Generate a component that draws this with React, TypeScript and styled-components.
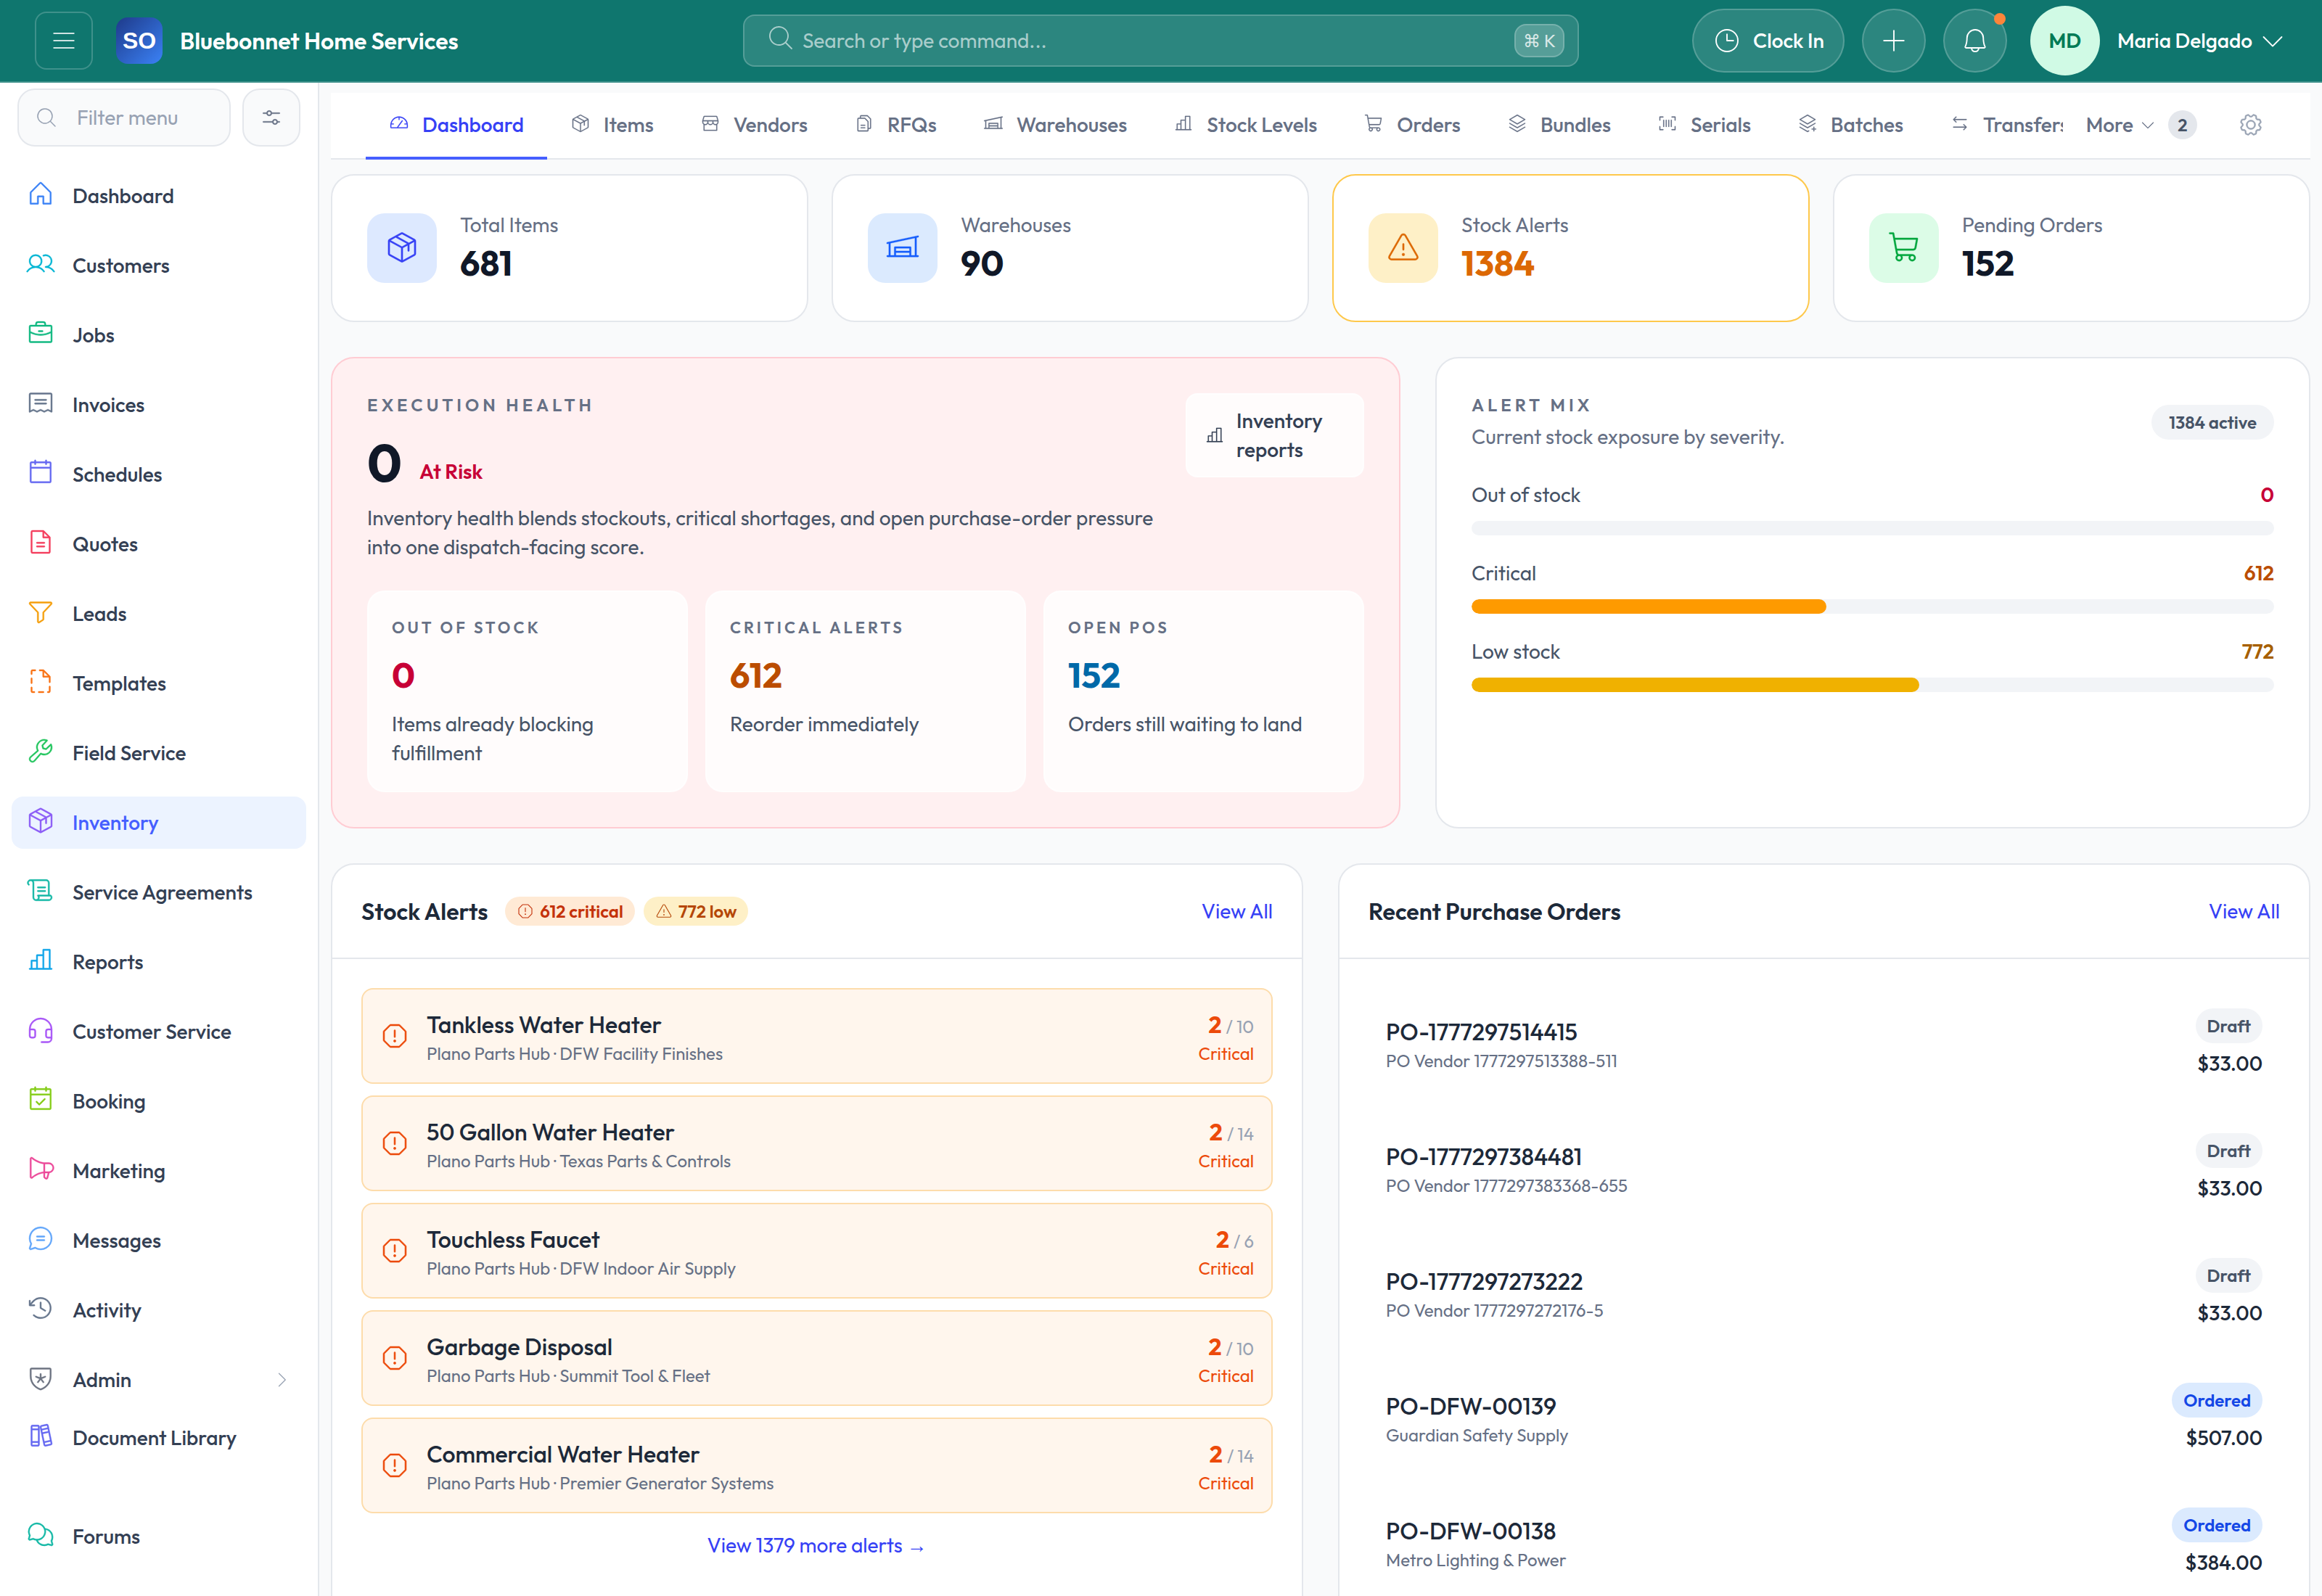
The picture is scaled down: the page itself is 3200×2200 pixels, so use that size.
import React from "react";
import styled, { createGlobalStyle } from "styled-components";
import type { IconType } from "react-icons";
import {
  PiArrowsLeftRightLight,
  PiBarcodeLight,
  PiBellLight,
  PiBooksLight,
  PiBriefcaseLight,
  PiCalendarBlankLight,
  PiCalendarCheckLight,
  PiCaretDownLight,
  PiCaretRightLight,
  PiChartBarLight,
  PiChatCircleTextLight,
  PiChatsCircleLight,
  PiClockCounterClockwiseLight,
  PiClockLight,
  PiFileDashedLight,
  PiFileTextLight,
  PiFilesLight,
  PiFunnelLight,
  PiGaugeLight,
  PiGearLight,
  PiHeadsetLight,
  PiHouseLight,
  PiListLight,
  PiMagnifyingGlassLight,
  PiMegaphoneLight,
  PiPackageLight,
  PiPlusLight,
  PiReceiptLight,
  PiScrollLight,
  PiShieldStarLight,
  PiShoppingCartLight,
  PiSlidersHorizontalLight,
  PiStackLight,
  PiStackPlusLight,
  PiStorefrontLight,
  PiUsersLight,
  PiWarehouseLight,
  PiWarningLight,
  PiWarningOctagonLight,
  PiWrenchLight,
} from "react-icons/pi";

const color = {
  brand: "#465fff",
  brandDark: "#3641f5",
  brandSoft: "#ecf3ff",
  ink: "#101828",
  heading: "#1d2939",
  body: "#344054",
  copy: "#475467",
  muted: "#667085",
  faint: "#98a2b3",
  line: "#e4e7ec",
  soft: "#f2f4f7",
  page: "#f9fafb",
  teal: "#0f766e",
  glass: "rgba(255, 255, 255, 0.12)",
  glassLine: "rgba(255, 255, 255, 0.2)",
};

const GlobalStyle = createGlobalStyle`
  *, *::before, *::after { box-sizing: border-box; }
  body {
    margin: 0;
    background: ${color.page};
    color: ${color.body};
    font-family: Outfit, "DejaVu Sans", sans-serif;
    font-size: 28px;
    line-height: 40px;
  }
  h1, h2, p, ul { margin: 0; padding: 0; font-weight: inherit; font-size: inherit; }
  ul { list-style: none; }
  a { color: inherit; text-decoration: none; }
  button, input { font: inherit; color: inherit; margin: 0; }
  button { cursor: pointer; }
  svg { display: block; flex: none; }
`;

const Shell = styled.div`
  display: flex;
  flex-direction: column;
  height: 100vh;
  overflow: hidden;
`;

/* ---------- top bar ---------- */

const TopBar = styled.header`
  display: flex;
  align-items: center;
  justify-content: space-between;
  flex: none;
  height: 114px;
  padding: 0 48px;
  background: ${color.teal};
  border-bottom: 2px solid ${color.glassLine};
  color: #fff;
`;

const TopSide = styled.div<{ $end?: boolean }>`
  display: flex;
  align-items: center;
  flex: 1 1 0;
  gap: ${(p) => (p.$end ? 24 : 0)}px;
  justify-content: ${(p) => (p.$end ? "flex-end" : "flex-start")};
`;

const MenuButton = styled.button`
  display: grid;
  place-items: center;
  width: 80px;
  height: 80px;
  padding: 0;
  background: none;
  border: 2px solid ${color.glassLine};
  border-radius: 16px;
  color: rgba(255, 255, 255, 0.8);
`;

const Brand = styled.a`
  display: flex;
  align-items: center;
  gap: 24px;
  margin-left: 32px;
  font-size: 32px;
  font-weight: 600;
`;

const BrandMark = styled.span`
  display: grid;
  place-items: center;
  width: 64px;
  height: 64px;
  border-radius: 16px;
  background: linear-gradient(135deg, #1e3a8a, #3b82f6);
  font-family: "Liberation Sans", Arial, sans-serif;
  font-weight: 700;
`;

const Search = styled.label`
  display: flex;
  align-items: center;
  flex: 0 1 1152px;
  height: 72px;
  gap: 10px;
  padding: 0 18px 0 30px;
  background: ${color.glass};
  border: 2px solid ${color.glassLine};
  border-radius: 16px;
  color: rgba(255, 255, 255, 0.6);
`;

const SearchIcon = styled.span`
  padding-bottom: 8px;
`;

const BareInput = styled.input`
  flex: 1 1 0;
  min-width: 0;
  padding: 0;
  background: none;
  border: 0;
  outline: 0;
  &::placeholder { color: currentColor; opacity: 1; }
`;

const Key = styled.kbd`
  padding: 0 10px;
  height: 46px;
  border: 2px solid ${color.glassLine};
  border-radius: 16px;
  background: ${color.glassLine};
  color: rgba(255, 255, 255, 0.8);
  font-family: inherit;
  font-size: 24px;
  line-height: 42px;
`;

const PillButton = styled.button<{ $round?: boolean }>`
  position: relative;
  display: flex;
  align-items: center;
  justify-content: center;
  gap: 16px;
  height: 88px;
  width: ${(p) => (p.$round ? "88px" : "auto")};
  padding: 0 ${(p) => (p.$round ? 0 : 26)}px;
  background: ${color.glass};
  border: 2px solid ${color.glassLine};
  border-radius: 44px;
  font-weight: 500;
`;

const Dot = styled.span`
  position: absolute;
  top: 4px;
  right: 0;
  width: 16px;
  height: 16px;
  border-radius: 50%;
  background: #fd853a;
`;

const Profile = styled.button`
  display: flex;
  align-items: center;
  gap: 8px;
  margin-left: 8px;
  padding: 0;
  background: none;
  border: 0;
  font-weight: 500;
`;

const Avatar = styled.span`
  display: grid;
  place-items: center;
  width: 96px;
  height: 96px;
  margin-right: 16px;
  border-radius: 50%;
  background: #d0fae5;
  color: #007a55;
  font-weight: 600;
`;

/* ---------- side bar ---------- */

const Body = styled.div`
  display: flex;
  flex: 1 1 0;
  min-height: 0;
`;

const Sidebar = styled.aside`
  flex: none;
  width: 440px;
  overflow: hidden;
  background: #fff;
  border-right: 2px solid ${color.line};
`;

const FilterRow = styled.div`
  display: flex;
  gap: 16px;
  padding: 8px 24px 32px;
`;

const FilterBox = styled.label`
  display: flex;
  align-items: center;
  flex: 1 1 0;
  min-width: 0;
  height: 80px;
  gap: 26px;
  padding: 0 22px;
  background: ${color.page};
  border: 2px solid ${color.line};
  border-radius: 24px;
  color: ${color.faint};
`;

const FilterButton = styled.button`
  display: grid;
  place-items: center;
  width: 80px;
  height: 80px;
  padding: 0;
  background: ${color.page};
  border: 2px solid ${color.line};
  border-radius: 24px;
  color: ${color.muted};

  svg { stroke-width: 4px; }
`;

const Menu = styled.ul<{ $tight?: boolean }>`
  display: flex;
  flex-direction: column;
  gap: 24px;
  padding: ${(p) => (p.$tight ? "8px 16px 0" : "0 16px")};
`;

const MenuTail = styled.ul`
  padding: 64px 16px 0;
`;

const MenuLink = styled.a<{ $active?: boolean }>`
  display: flex;
  align-items: center;
  gap: 24px;
  height: 72px;
  padding: 0 20px;
  border-radius: 16px;
  background: ${(p) => (p.$active ? color.brandSoft : "transparent")};
  color: ${(p) => (p.$active ? color.brand : color.body)};
  font-weight: 500;
`;

const MenuIcon = styled.span<{ $tint: string }>`
  padding-bottom: 6px;
  color: ${(p) => p.$tint};

  svg { stroke-width: 3px; }
`;

const MenuText = styled.span`
  flex: 1 1 0;
`;

const MenuCaret = styled.span`
  color: ${color.faint};
`;

/* ---------- main column ---------- */

const Main = styled.main`
  flex: 1 1 0;
  min-width: 0;
  padding: 14px 16px 48px;
  overflow: hidden auto;
  scrollbar-width: none;
  background: ${color.page};
`;

const TabBar = styled.div`
  display: flex;
  height: 92px;
  padding: 0 40px 0 48px;
  background: #fff;
  border-bottom: 2px solid ${color.line};
  color: ${color.muted};
  font-weight: 500;
`;

const TabList = styled.nav`
  display: flex;
  flex: 1 1 0;
  min-width: 0;
  margin-bottom: -2px;
  overflow: hidden;
`;

const Tab = styled.a<{ $active?: boolean }>`
  display: flex;
  align-items: center;
  flex: none;
  gap: 18px;
  padding: ${(p) => (p.$active ? "0 32px" : "0 32px 4px")};
  border-bottom: ${(p) => (p.$active ? `4px solid ${color.brand}` : "0")};
  color: ${(p) => (p.$active ? color.brandDark : "inherit")};
`;

const TabIcon = styled.span`
  padding-bottom: 4px;

  svg { stroke-width: 2px; }
`;

const MoreButton = styled.button`
  display: flex;
  align-items: center;
  gap: 8px;
  padding: 0 32px 2px;
  background: none;
  border: 0;
`;

const Count = styled.span`
  width: 40px;
  height: 40px;
  margin-left: 8px;
  border-radius: 50%;
  background: ${color.line};
  color: ${color.copy};
  font-size: 24px;
  font-weight: 600;
  text-align: center;
`;

const GearButton = styled.button`
  display: grid;
  place-items: center;
  width: 84px;
  padding: 0 0 2px;
  background: none;
  border: 0;
  color: ${color.faint};

  svg { stroke-width: 4px; }
`;

const Card = styled.section<{ $edge?: string; $fill?: string }>`
  background: ${(p) => p.$fill ?? "#fff"};
  border: 2px solid ${(p) => p.$edge ?? color.line};
  border-radius: 32px;
`;

const Columns = styled.div<{ $tracks: string; $gap: number; $top: number }>`
  display: grid;
  grid-template-columns: ${(p) => p.$tracks};
  gap: ${(p) => p.$gap}px;
  margin-top: ${(p) => p.$top}px;
`;

/* stat tiles */

const StatCard = styled(Card)`
  display: flex;
  align-items: center;
  gap: 32px;
  padding: 48px;
`;

const StatIcon = styled.span<{ $fill: string; $tint: string }>`
  display: grid;
  place-items: center;
  width: 96px;
  height: 96px;
  padding-bottom: 2px;
  border-radius: 24px;
  background: ${(p) => p.$fill};
  color: ${(p) => p.$tint};

  svg { stroke-width: 2px; }
`;

const StatLabel = styled.p`
  color: ${color.muted};
`;

const BigNumber = styled.p<{ $tint?: string }>`
  color: ${(p) => p.$tint ?? color.ink};
  font-size: 48px;
  font-weight: 700;
  line-height: 64px;
`;

/* health */

const Panel = styled(Card)`
  padding: 48px;
`;

const Eyebrow = styled.h2<{ $small?: boolean }>`
  color: ${color.muted};
  font-size: ${(p) => (p.$small ? 22 : 24)}px;
  font-weight: 600;
  line-height: ${(p) => (p.$small ? 34 : 32)}px;
  letter-spacing: ${(p) => (p.$small ? 4 : 5)}px;
  text-transform: uppercase;
`;

const HealthTop = styled.div`
  display: flex;
  align-items: flex-start;
  justify-content: space-between;
  gap: 32px;
`;

const ScoreRow = styled.div`
  display: flex;
  align-items: flex-end;
  gap: 24px;
  margin: 24px 0 16px;
`;

const Score = styled.span`
  color: ${color.ink};
  font-size: 72px;
  font-weight: 700;
  line-height: 80px;
`;

const Risk = styled.span`
  padding-bottom: 8px;
  color: #c70036;
  font-weight: 600;
`;

const Copy = styled.p`
  color: ${color.copy};
`;

const ReportsLink = styled.a`
  display: flex;
  align-items: center;
  flex: none;
  gap: 16px;
  width: 246px;
  padding: 16px 24px;
  border: 2px solid rgba(255, 255, 255, 0.6);
  border-radius: 16px;
  background: rgba(255, 255, 255, 0.8);
  font-weight: 500;

  svg { stroke-width: 2px; }
`;

const HealthCell = styled.div`
  padding: 32px;
  border: 2px solid rgba(255, 255, 255, 0.6);
  border-radius: 24px;
  background: rgba(255, 255, 255, 0.8);
`;

const CellNumber = styled(BigNumber)`
  margin: 16px 0;
`;

/* alert mix */

const MixTop = styled.div`
  display: flex;
  align-items: center;
  justify-content: space-between;
`;

const MixNote = styled.p`
  margin-top: 8px;
  color: ${color.muted};
`;

const Badge = styled.span<{ $fill?: string; $tint?: string; $slim?: boolean }>`
  display: inline-flex;
  align-items: center;
  gap: 8px;
  height: ${(p) => (p.$slim ? 40 : 48)}px;
  padding: 0 16px;
  border-radius: 24px;
  background: ${(p) => p.$fill ?? color.soft};
  color: ${(p) => p.$tint ?? color.copy};
  font-size: 24px;
  font-weight: 600;
  line-height: 32px;
`;

const MixBadge = styled(Badge)`
  padding: 0 24px;
`;

const MixList = styled.ul`
  display: grid;
  gap: 32px;
  margin-top: 40px;
`;

const MixRow = styled.div`
  display: flex;
  justify-content: space-between;
  color: ${color.copy};
`;

const MixValue = styled.span<{ $tint: string }>`
  color: ${(p) => p.$tint};
  font-weight: 600;
`;

const Track = styled.div`
  height: 20px;
  margin-top: 16px;
  border-radius: 10px;
  overflow: hidden;
  background: ${color.soft};
`;

const Fill = styled.div<{ $tint: string }>`
  height: 100%;
  border-radius: 10px;
  background: ${(p) => p.$tint};
`;

/* lists */

const ListHead = styled.div`
  display: flex;
  align-items: center;
  gap: 12px;
  padding: 40px;
  border-bottom: 2px solid ${color.line};
  line-height: 48px;
`;

const ListTitle = styled.h2`
  margin-right: 12px;
  color: ${color.heading};
  font-size: 32px;
  font-weight: 600;
`;

const ViewAll = styled.a`
  margin-left: auto;
  color: ${color.brandDark};
`;

const ListBody = styled.div`
  padding: 40px;
`;

const Stack = styled.ul<{ $gap: number }>`
  display: grid;
  gap: ${(p) => p.$gap}px;
`;

const AlertRow = styled.li`
  display: flex;
  align-items: center;
  gap: 24px;
  padding: 24px;
  background: #fff6ed;
  border: 2px solid #fddcab;
  border-radius: 16px;
  color: #ec4a0a;

  svg { stroke-width: 4px; }
`;

const OrderRow = styled.li`
  display: flex;
  align-items: center;
  padding: 28px 24px;
`;

const RowText = styled.div`
  flex: 1 1 0;
  min-width: 0;
`;

const RowTitle = styled.p`
  color: ${color.heading};
  font-size: 32px;
  font-weight: 500;
  line-height: 48px;
`;

const RowNote = styled.p`
  color: ${color.muted};
  font-size: 24px;
  line-height: 32px;
`;

const RowEnd = styled.div`
  text-align: right;
`;

const Quantity = styled.p`
  font-size: 32px;
  font-weight: 700;
  line-height: 48px;
`;

const Minimum = styled.span`
  color: ${color.faint};
  font-size: 24px;
  font-weight: 400;
  line-height: 24px;
`;

const Severity = styled.p`
  font-size: 24px;
  line-height: 32px;
`;

const OrderEnd = styled.div`
  display: flex;
  flex-direction: column;
  align-items: flex-end;
  gap: 8px;
`;

const Amount = styled.span`
  color: ${color.heading};
  font-weight: 500;
`;

const MoreAlerts = styled.a`
  display: block;
  margin-top: 24px;
  color: ${color.brandDark};
  text-align: center;
`;

const Arrow = styled.span`
  font-family: "Liberation Sans", Arial, sans-serif;
  line-height: 28px;
`;

/* ---------- data ---------- */

type MenuEntry = [string, IconType, string];

const menu: MenuEntry[] = [
  ["Dashboard", PiHouseLight, "#3b82f6"],
  ["Customers", PiUsersLight, "#06b6d4"],
  ["Jobs", PiBriefcaseLight, "#10b981"],
  ["Invoices", PiReceiptLight, "#64748b"],
  ["Schedules", PiCalendarBlankLight, "#6366f1"],
  ["Quotes", PiFileTextLight, "#f43f5e"],
  ["Leads", PiFunnelLight, "#f59e0b"],
  ["Templates", PiFileDashedLight, "#f97316"],
  ["Field Service", PiWrenchLight, "#22c55e"],
  ["Inventory", PiPackageLight, "#8b5cf6"],
  ["Service Agreements", PiScrollLight, "#14b8a6"],
  ["Reports", PiChartBarLight, "#0ea5e9"],
  ["Customer Service", PiHeadsetLight, "#a855f7"],
  ["Booking", PiCalendarCheckLight, "#84cc16"],
  ["Marketing", PiMegaphoneLight, "#ec4899"],
  ["Messages", PiChatCircleTextLight, "#60a5fa"],
  ["Activity", PiClockCounterClockwiseLight, "#64748b"],
  ["Admin", PiShieldStarLight, "#6b7280"],
];

const tabs: [string, IconType][] = [
  ["Dashboard", PiGaugeLight],
  ["Items", PiPackageLight],
  ["Vendors", PiStorefrontLight],
  ["RFQs", PiFilesLight],
  ["Warehouses", PiWarehouseLight],
  ["Stock Levels", PiChartBarLight],
  ["Orders", PiShoppingCartLight],
  ["Bundles", PiStackLight],
  ["Serials", PiBarcodeLight],
  ["Batches", PiStackPlusLight],
  ["Transfers", PiArrowsLeftRightLight],
];

const stats = [
  { label: "Total Items", value: 681, icon: PiPackageLight, fill: "#dde9ff", tint: "#3641f5" },
  { label: "Warehouses", value: 90, icon: PiWarehouseLight, fill: "#dbeafe", tint: "#155dfc" },
  { label: "Stock Alerts", value: 1384, icon: PiWarningLight, fill: "#fef0c7", tint: "#dc6803", edge: "#fec84b", ink: "#dc6803" },
  { label: "Pending Orders", value: 152, icon: PiShoppingCartLight, fill: "#dcfce7", tint: "#00a63e" },
];

const health = [
  { label: "Out of stock", value: 0, note: "Items already blocking fulfillment", tint: "#c70036" },
  { label: "Critical alerts", value: 612, note: "Reorder immediately", tint: "#bb4d00" },
  { label: "Open POs", value: 152, note: "Orders still waiting to land", tint: "#0069a8" },
];

const activeAlerts = 1384;

const mix = [
  { label: "Out of stock", value: 0, tint: "#c70036", bar: "#ff2056" },
  { label: "Critical", value: 612, tint: "#bb4d00", bar: "#fe9a00" },
  { label: "Low stock", value: 772, tint: "#a65f00", bar: "#f0b100" },
];

const alerts: [string, string, number][] = [
  ["Tankless Water Heater", "DFW Facility Finishes", 10],
  ["50 Gallon Water Heater", "Texas Parts & Controls", 14],
  ["Touchless Faucet", "DFW Indoor Air Supply", 6],
  ["Garbage Disposal", "Summit Tool & Fleet", 10],
  ["Commercial Water Heater", "Premier Generator Systems", 14],
];

const orders: [string, string, string, string][] = [
  ["PO-1777297514415", "PO Vendor 1777297513388-511", "Draft", "$33.00"],
  ["PO-1777297384481", "PO Vendor 1777297383368-655", "Draft", "$33.00"],
  ["PO-1777297273222", "PO Vendor 1777297272176-5", "Draft", "$33.00"],
  ["PO-DFW-00139", "Guardian Safety Supply", "Ordered", "$507.00"],
  ["PO-DFW-00138", "Metro Lighting & Power", "Ordered", "$384.00"],
];

/* ---------- parts ---------- */

function MenuItem({ entry, caret }: { entry: MenuEntry; caret?: boolean }) {
  const [name, Icon, tint] = entry;
  return (
    <li>
      <MenuLink href="#" $active={name === "Inventory"}>
        <MenuIcon $tint={tint}><Icon size={40} /></MenuIcon>
        <MenuText>{name}</MenuText>
        {caret && <MenuCaret><PiCaretRightLight size={28} /></MenuCaret>}
      </MenuLink>
    </li>
  );
}

function Header() {
  return (
    <TopBar>
      <TopSide>
        <MenuButton aria-label="Toggle menu"><PiListLight size={40} /></MenuButton>
        <Brand href="#">
          <BrandMark>SO</BrandMark>
          Bluebonnet Home Services
        </Brand>
      </TopSide>
      <Search>
        <SearchIcon><PiMagnifyingGlassLight size={40} /></SearchIcon>
        <BareInput type="text" aria-label="Search" placeholder="Search or type command..." />
        <Key>⌘ K</Key>
      </Search>
      <TopSide $end>
        <PillButton><PiClockLight size={40} />Clock In</PillButton>
        <PillButton $round aria-label="Create"><PiPlusLight size={40} /></PillButton>
        <PillButton $round aria-label="Notifications"><PiBellLight size={40} /><Dot /></PillButton>
        <Profile>
          <Avatar>MD</Avatar>
          Maria Delgado
          <PiCaretDownLight size={40} />
        </Profile>
      </TopSide>
    </TopBar>
  );
}

function SideNav() {
  return (
    <Sidebar>
      <FilterRow>
        <FilterBox>
          <PiMagnifyingGlassLight size={32} />
          <BareInput type="text" aria-label="Filter menu" placeholder="Filter menu" />
        </FilterBox>
        <FilterButton aria-label="Menu settings"><PiSlidersHorizontalLight size={32} /></FilterButton>
      </FilterRow>
      <Menu>
        {menu.map((entry) => (
          <MenuItem key={entry[0]} entry={entry} caret={entry[0] === "Admin"} />
        ))}
      </Menu>
      <Menu $tight>
        <MenuItem entry={["Document Library", PiBooksLight, "#6366f1"]} />
      </Menu>
      <MenuTail>
        <MenuItem entry={["Forums", PiChatsCircleLight, "#14b8a6"]} />
      </MenuTail>
    </Sidebar>
  );
}

export default function App() {
  return (
    <Shell>
      <GlobalStyle />
      <Header />
      <Body>
        <SideNav />
        <Main>
          <TabBar>
            <TabList aria-label="Inventory sections">
              {tabs.map(([name, Icon]) => (
                <Tab key={name} href="#" $active={name === "Dashboard"}>
                  <TabIcon><Icon size={28} /></TabIcon>
                  {name}
                </Tab>
              ))}
            </TabList>
            <MoreButton>
              More
              <PiCaretDownLight size={24} />
              <Count>2</Count>
            </MoreButton>
            <GearButton aria-label="Tab settings"><PiGearLight size={36} /></GearButton>
          </TabBar>

          <Columns $tracks="repeat(4, 1fr)" $gap={32} $top={20}>
            {stats.map((s) => (
              <StatCard key={s.label} $edge={s.edge}>
                <StatIcon $fill={s.fill} $tint={s.tint}><s.icon size={48} /></StatIcon>
                <div>
                  <StatLabel>{s.label}</StatLabel>
                  <BigNumber $tint={s.ink}>{s.value}</BigNumber>
                </div>
              </StatCard>
            ))}
          </Columns>

          <Columns $tracks="11fr 9fr" $gap={48} $top={48}>
            <Panel $fill="#fff0f1" $edge="#ffccd3">
              <HealthTop>
                <div>
                  <Eyebrow>Execution health</Eyebrow>
                  <ScoreRow>
                    <Score>0</Score>
                    <Risk>At Risk</Risk>
                  </ScoreRow>
                  <Copy>
                    Inventory health blends stockouts, critical shortages, and open purchase-order pressure into one
                    dispatch-facing score.
                  </Copy>
                </div>
                <ReportsLink href="#">
                  <PiChartBarLight size={28} />
                  Inventory reports
                </ReportsLink>
              </HealthTop>
              <Columns $tracks="repeat(3, 1fr)" $gap={24} $top={40}>
                {health.map((h) => (
                  <HealthCell key={h.label}>
                    <Eyebrow $small>{h.label}</Eyebrow>
                    <CellNumber $tint={h.tint}>{h.value}</CellNumber>
                    <Copy>{h.note}</Copy>
                  </HealthCell>
                ))}
              </Columns>
            </Panel>

            <Panel>
              <MixTop>
                <div>
                  <Eyebrow>Alert mix</Eyebrow>
                  <MixNote>Current stock exposure by severity.</MixNote>
                </div>
                <MixBadge>{activeAlerts} active</MixBadge>
              </MixTop>
              <MixList>
                {mix.map((m) => (
                  <li key={m.label}>
                    <MixRow>
                      <span>{m.label}</span>
                      <MixValue $tint={m.tint}>{m.value}</MixValue>
                    </MixRow>
                    <Track>
                      <Fill $tint={m.bar} style={{ width: `${(m.value / activeAlerts) * 100}%` }} />
                    </Track>
                  </li>
                ))}
              </MixList>
            </Panel>
          </Columns>

          <Columns $tracks="1fr 1fr" $gap={48} $top={48}>
            <Card>
              <ListHead>
                <ListTitle>Stock Alerts</ListTitle>
                <Badge $slim $fill="#ffead5" $tint="#c4320a"><PiWarningOctagonLight size={24} />612 critical</Badge>
                <Badge $slim $fill="#fef0c7" $tint="#b54708"><PiWarningLight size={24} />772 low</Badge>
                <ViewAll href="#">View All</ViewAll>
              </ListHead>
              <ListBody>
                <Stack $gap={16}>
                  {alerts.map(([name, vendor, minimum]) => (
                    <AlertRow key={name}>
                      <PiWarningOctagonLight size={40} />
                      <RowText>
                        <RowTitle>{name}</RowTitle>
                        <RowNote>Plano Parts Hub · {vendor}</RowNote>
                      </RowText>
                      <RowEnd>
                        <Quantity>2 <Minimum>/ {minimum}</Minimum></Quantity>
                        <Severity>Critical</Severity>
                      </RowEnd>
                    </AlertRow>
                  ))}
                </Stack>
                <MoreAlerts href="#">View 1379 more alerts <Arrow>→</Arrow></MoreAlerts>
              </ListBody>
            </Card>

            <Card>
              <ListHead>
                <ListTitle>Recent Purchase Orders</ListTitle>
                <ViewAll href="#">View All</ViewAll>
              </ListHead>
              <ListBody>
                <Stack $gap={20}>
                  {orders.map(([number, vendor, status, amount]) => (
                    <OrderRow key={number}>
                      <RowText>
                        <RowTitle>{number}</RowTitle>
                        <RowNote>{vendor}</RowNote>
                      </RowText>
                      <OrderEnd>
                        {status === "Ordered" ? (
                          <Badge $fill="#dbeafe" $tint="#1447e6">{status}</Badge>
                        ) : (
                          <Badge>{status}</Badge>
                        )}
                        <Amount>{amount}</Amount>
                      </OrderEnd>
                    </OrderRow>
                  ))}
                </Stack>
              </ListBody>
            </Card>
          </Columns>
        </Main>
      </Body>
    </Shell>
  );
}
